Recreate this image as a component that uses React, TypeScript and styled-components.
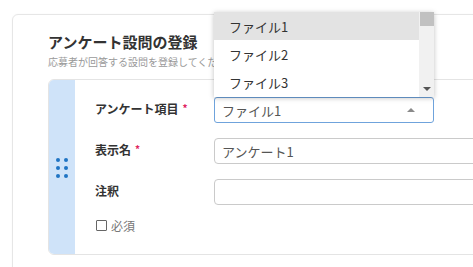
import styled, { createGlobalStyle } from "styled-components";

const GlobalStyle = createGlobalStyle`
  html, body {
    margin: 0;
    padding: 0;
    background: #ffffff;
    overflow: hidden;
  }
  body {
    font-family: "Noto Sans CJK JP", "Noto Sans", sans-serif;
    color: #333333;
  }
`;

const Page = styled.div`
  padding: 14px 0 0 12px;
  width: 473px;
  height: 267px;
  box-sizing: border-box;
  overflow: hidden;
`;

const Card = styled.section`
  width: 560px;
  height: 300px;
  box-sizing: border-box;
  border: 1px solid #e6e6e6;
  border-radius: 6px;
  padding: 16px 0 0 35px;
  box-shadow: 0 0 2px rgba(0, 0, 0, 0.04);
`;

const Title = styled.h2`
  margin: 0;
  font-size: 15px;
  line-height: 22px;
  font-weight: 700;
  color: #333333;
`;

const Subtitle = styled.p`
  margin: 2px 0 0;
  font-size: 10px;
  line-height: 14px;
  color: #9a9a9a;
`;

const Question = styled.div`
  margin-top: 10px;
  display: flex;
  border: 1px solid #e4e4e4;
  border-radius: 6px;
  height: 176px;
  box-sizing: border-box;
`;

const Handle = styled.div`
  width: 26px;
  flex: none;
  background: #cfe3f9;
  border-radius: 5px 0 0 5px;
  display: flex;
  align-items: center;
  justify-content: center;
`;

const Dots = styled.div`
  display: grid;
  grid-template-columns: repeat(2, 4px);
  gap: 4px 4px;
  margin-top: 2px;
`;

const Dot = styled.span`
  width: 4px;
  height: 4px;
  border-radius: 50%;
  background: #1f74c4;
`;

const Fields = styled.div`
  flex: 1;
  padding: 17px 0 0 20px;
  display: flex;
  flex-direction: column;
  gap: 15px;
`;

const Row = styled.div`
  display: flex;
  align-items: center;
  height: 26px;
`;

const Label = styled.label`
  width: 119px;
  flex: none;
  font-size: 12px;
  font-weight: 700;
  color: #333333;
  padding-bottom: 3px;
`;

const Required = styled.span`
  color: #e0245e;
  font-size: 10px;
  vertical-align: top;
  margin-left: 4px;
`;

const SelectWrap = styled.div`
  position: relative;
  width: 220px;
`;

const SelectBox = styled.div`
  height: 26px;
  box-sizing: border-box;
  border: 1px solid #6fa3dc;
  border-radius: 3px;
  display: flex;
  align-items: center;
  justify-content: space-between;
  padding: 0 18px 0 7px;
  font-size: 13px;
  color: #555555;
`;

const Caret = styled.span<{ $up?: boolean }>`
  display: block;
  width: 0;
  height: 0;
  border-left: 4px solid transparent;
  border-right: 4px solid transparent;
  ${(p) =>
    p.$up
      ? "border-bottom: 4px solid #8a8a8a;"
      : "border-top: 4px solid #555555;"}
`;

const Menu = styled.ul`
  position: absolute;
  left: 0;
  right: 0;
  bottom: 100%;
  height: 85px;
  margin: 0;
  padding: 0 15px 0 0;
  list-style: none;
  background: #ffffff;
  box-shadow: 0 1px 5px rgba(0, 0, 0, 0.25);
  display: flex;
  flex-direction: column;
  z-index: 2;
`;

const MenuItem = styled.li<{ $active?: boolean }>`
  height: 28px;
  flex: none;
  display: flex;
  align-items: center;
  padding-left: 15px;
  font-size: 13px;
  color: #333333;
  background: ${(p) => (p.$active ? "#e3e3e3" : "#ffffff")};
`;

const Scrollbar = styled.div`
  position: absolute;
  top: 0;
  right: 0;
  bottom: 0;
  width: 15px;
  background: #f1f1f1;
  display: flex;
  flex-direction: column;
  justify-content: space-between;
  align-items: center;
  padding-bottom: 6px;
  box-sizing: border-box;
`;

const Thumb = styled.div`
  width: 14px;
  height: 14px;
  background: #c1c1c1;
`;

const Input = styled.div`
  width: 300px;
  height: 26px;
  box-sizing: border-box;
  border: 1px solid #cacaca;
  border-radius: 4px;
  display: flex;
  align-items: center;
  padding-left: 7px;
  font-size: 13px;
  color: #555555;
`;

const CheckRow = styled.div`
  display: flex;
  align-items: center;
  gap: 4px;
  margin-top: -3px;
  font-size: 12px;
  color: #777777;
  padding-left: 1px;
`;

const Box = styled.span`
  width: 9px;
  height: 9px;
  border: 1px solid #666666;
  border-radius: 1px;
`;

const files = ["ファイル1", "ファイル2", "ファイル3"];

export default function App() {
  return (
    <>
      <GlobalStyle />
      <Page>
        <Card>
          <Title>アンケート設問の登録</Title>
          <Subtitle>応募者が回答する設問を登録してください</Subtitle>
          <Question>
            <Handle>
              <Dots>
                {Array.from({ length: 6 }).map((_, i) => (
                  <Dot key={i} />
                ))}
              </Dots>
            </Handle>
            <Fields>
              <Row>
                <Label>
                  アンケート項目<Required>*</Required>
                </Label>
                <SelectWrap>
                  <Menu>
                    {files.map((f, i) => (
                      <MenuItem key={f} $active={i === 0}>
                        {f}
                      </MenuItem>
                    ))}
                    <Scrollbar>
                      <Thumb />
                      <Caret />
                    </Scrollbar>
                  </Menu>
                  <SelectBox>
                    ファイル1
                    <Caret $up />
                  </SelectBox>
                </SelectWrap>
              </Row>
              <Row>
                <Label>
                  表示名<Required>*</Required>
                </Label>
                <Input>アンケート1</Input>
              </Row>
              <Row>
                <Label>注釈</Label>
                <Input />
              </Row>
              <CheckRow>
                <Box />
                必須
              </CheckRow>
            </Fields>
          </Question>
        </Card>
      </Page>
    </>
  );
}
